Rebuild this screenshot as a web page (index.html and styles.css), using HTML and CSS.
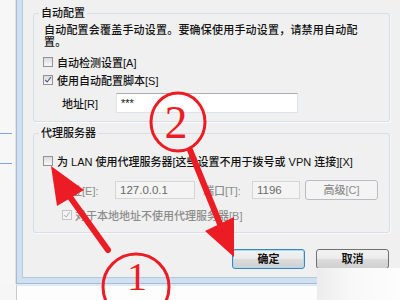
FILE: index.html
```html
<!DOCTYPE html>
<html lang="zh-CN">
<head>
<meta charset="utf-8">
<title>局域网设置</title>
<link rel="stylesheet" href="styles.css">
</head>
<body>
<div class="desk">
  <div class="main">
    <div class="strip"><span class="hline"></span><span class="hline"></span></div>
    <div class="window">
      <div class="dialog">
        <fieldset class="group g1">
          <legend>自动配置</legend>
          <p class="desc">自动配置会覆盖手动设置。要确保使用手动设置，请禁用自动配<br>置。</p>
          <div class="check c1"><span class="box"></span><span>自动检测设置[A]</span></div>
          <div class="check c2"><span class="box"><svg viewBox="0 0 10 10" width="8" height="8"><path d="M1.5 5 L4 7.5 L8.5 1.5" fill="none" stroke="#4b5d8e" stroke-width="1.4"/></svg></span><span>使用自动配置脚本[S]</span></div>
          <div class="addr"><span class="lbl">地址[R]</span><span class="input wide">***</span></div>
        </fieldset>
        <fieldset class="group g2">
          <legend>代理服务器</legend>
          <div class="check c3"><span class="box"></span><span>为 LAN 使用代理服务器[这些设置不用于拨号或 VPN 连接][X]</span></div>
          <div class="proxy-row">
            <span class="lbl dis">地址[E]:</span>
            <span class="input dis ip">127.0.0.1</span>
            <span class="lbl dis port-l">端口[T]:</span>
            <span class="input dis port">1196</span>
            <span class="btn dis adv">高级[C]</span>
          </div>
          <div class="check c4 dis"><span class="box"><svg viewBox="0 0 10 10" width="8" height="8"><path d="M1.5 5 L4 7.5 L8.5 1.5" fill="none" stroke="#a8a8a8" stroke-width="1.2"/></svg></span><span>对于本地地址不使用代理服务器[B]</span></div>
        </fieldset>
        <div class="actions">
          <span class="btn default">确定</span>
          <span class="btn">取消</span>
        </div>
      </div>
    </div>
  </div>
  <div class="taskbar"></div>
  <div class="fade"></div>
  <svg class="marks" viewBox="0 0 400 300" width="400" height="300">
    <g fill="none" stroke="#ec1c24" stroke-width="3">
      <ellipse cx="178" cy="122" rx="27" ry="29"/>
      <circle cx="136" cy="287" r="33"/>
    </g>
    <g stroke="#ec1c24" stroke-width="6" stroke-linecap="round">
      <line x1="108" y1="250" x2="70" y2="197"/>
      <line x1="190" y1="150" x2="220" y2="224"/>
    </g>
    <g fill="#ec1c24">
      <polygon points="51,166 84,190 57,206"/>
      <polygon points="234,257 234,217 205,231"/>
    </g>
    <text x="176" y="138" class="digit" font-size="46">2</text>
    <text x="137" y="290" class="digit" font-size="40">1</text>
  </svg>
</div>
</body>
</html>
```

FILE: styles.css
```css
* { box-sizing: border-box; }
html, body { margin: 0; padding: 0; }
body {
  width: 400px;
  height: 300px;
  overflow: hidden;
  background: #f6f6f6;
  font-family: "Liberation Sans", "Noto Sans CJK SC", sans-serif;
  font-size: 11px;
  font-weight: 500;
  color: #111;
}
.desk {
  position: relative;
  width: 400px;
  height: 300px;
  display: flex;
  flex-direction: column;
}
.main {
  display: flex;
  height: 284px;
}
.strip {
  width: 16px;
  display: flex;
  flex-direction: column;
  gap: 29px;
  padding-top: 133px;
  background: #f7f7f7;
  border-right: 1px solid #e2e2e2;
}
.hline {
  display: block;
  width: 12px;
  height: 1px;
  background: #7ea6dc;
}
.window {
  flex: 1;
  border-left: 1px solid #a9bbce;
  border-bottom: 1px solid #a9bbce;
  padding: 0 0 5px 5px;
  background: #cfe0f2;
}
.dialog {
  height: 100%;
  background: #f0f0f0;
  border-left: 1px solid #b7c8da;
  border-bottom: 1px solid #b7c8da;
  padding: 6px 10px 0 10px;
}
.group {
  margin: 0;
  border: 1px solid #d5dfe5;
  border-radius: 3px;
  padding: 0 8px 0 9px;
  box-shadow: 1px 1px 0 #fafafa;
}
.group legend {
  padding: 0 2px;
  margin-left: -4px;
  line-height: 14px;
}
.g1 { padding-bottom: 8px; }
.g2 { margin-top: 4px; padding-bottom: 9px; }
.desc {
  margin: 4px 0 0 1px;
  line-height: 12px;
  letter-spacing: 0.2px;
}
.check {
  display: flex;
  align-items: center;
  gap: 4px;
  height: 16px;
  white-space: nowrap;
}
.box {
  width: 10px;
  height: 10px;
  border: 1px solid #929292;
  background: linear-gradient(#dcdcdc, #f8f8f8);
  display: flex;
  align-items: center;
  justify-content: center;
}
.c1 { margin-top: 6px; }
.c2 { margin-top: 2px; }
.c3 { margin-top: 13px; }
.c4 { margin-top: 7px; margin-left: 19px; gap: 3px; }
.dis { color: #8c8c8c; }
.c4 .box { border-color: #c4c4c4; background: #f3f3f3; }
.addr {
  display: flex;
  align-items: center;
  margin-top: 5px;
  margin-left: 19px;
  height: 20px;
}
.lbl { display: block; width: 54px; }
.input {
  display: block;
  height: 20px;
  background: #fff;
  border: 1px solid #dde3e9;
  border-top-color: #abadb3;
  padding: 1px 4px;
  line-height: 16px;
}
.wide { width: 182px; }
.proxy-row {
  display: flex;
  align-items: center;
  margin-top: 11px;
  margin-left: 17px;
  height: 20px;
}
.proxy-row .lbl { width: 55px; }
.input.dis {
  height: 18px;
  background: #f4f4f4;
  border: 1px solid #d3d6d9;
  color: #6a6a6a;
  line-height: 14px;
  font-size: 11.5px;
}
.ip { width: 80px; }
.port-l { margin-left: 8px; width: 49px !important; }
.port { width: 48px; }
.btn {
  display: block;
  width: 73px;
  height: 20px;
  border: 1px solid #707070;
  border-radius: 3px;
  background: linear-gradient(#f3f3f3 0%, #ebebeb 48%, #dcdcdc 52%, #d0d0d0 100%);
  text-align: center;
  line-height: 18px;
  color: #111;
  font-weight: bold;
}
.btn.adv {
  margin-left: 5px;
  border-color: #b9bdc1;
  background: #f4f4f4;
  color: #8c8c8c;
  font-weight: 500;
}
.actions {
  display: flex;
  justify-content: flex-end;
  gap: 11px;
  margin-top: 16px;
  padding-right: 1px;
}
.btn.default {
  border-color: #3c86bf;
  box-shadow: inset 0 0 0 1px #a9dcf6;
}
.taskbar {
  flex: 1;
  margin-left: 16px;
  background: #fdfdfd;
  border-top: 2px solid #e0ebf6;
  border-left: 1px solid #c8c8c8;
}
.fade {
  position: absolute;
  right: 0;
  bottom: 0;
  width: 83px;
  height: 32px;
  background: linear-gradient(to right, #ececec, #f8f8f8 40%, #fdfdfd);
}
.marks {
  position: absolute;
  left: 0;
  top: 0;
  pointer-events: none;
}
.digit {
  font-family: "Liberation Serif", serif;
  fill: #ec1c24;
  text-anchor: middle;
}
```
